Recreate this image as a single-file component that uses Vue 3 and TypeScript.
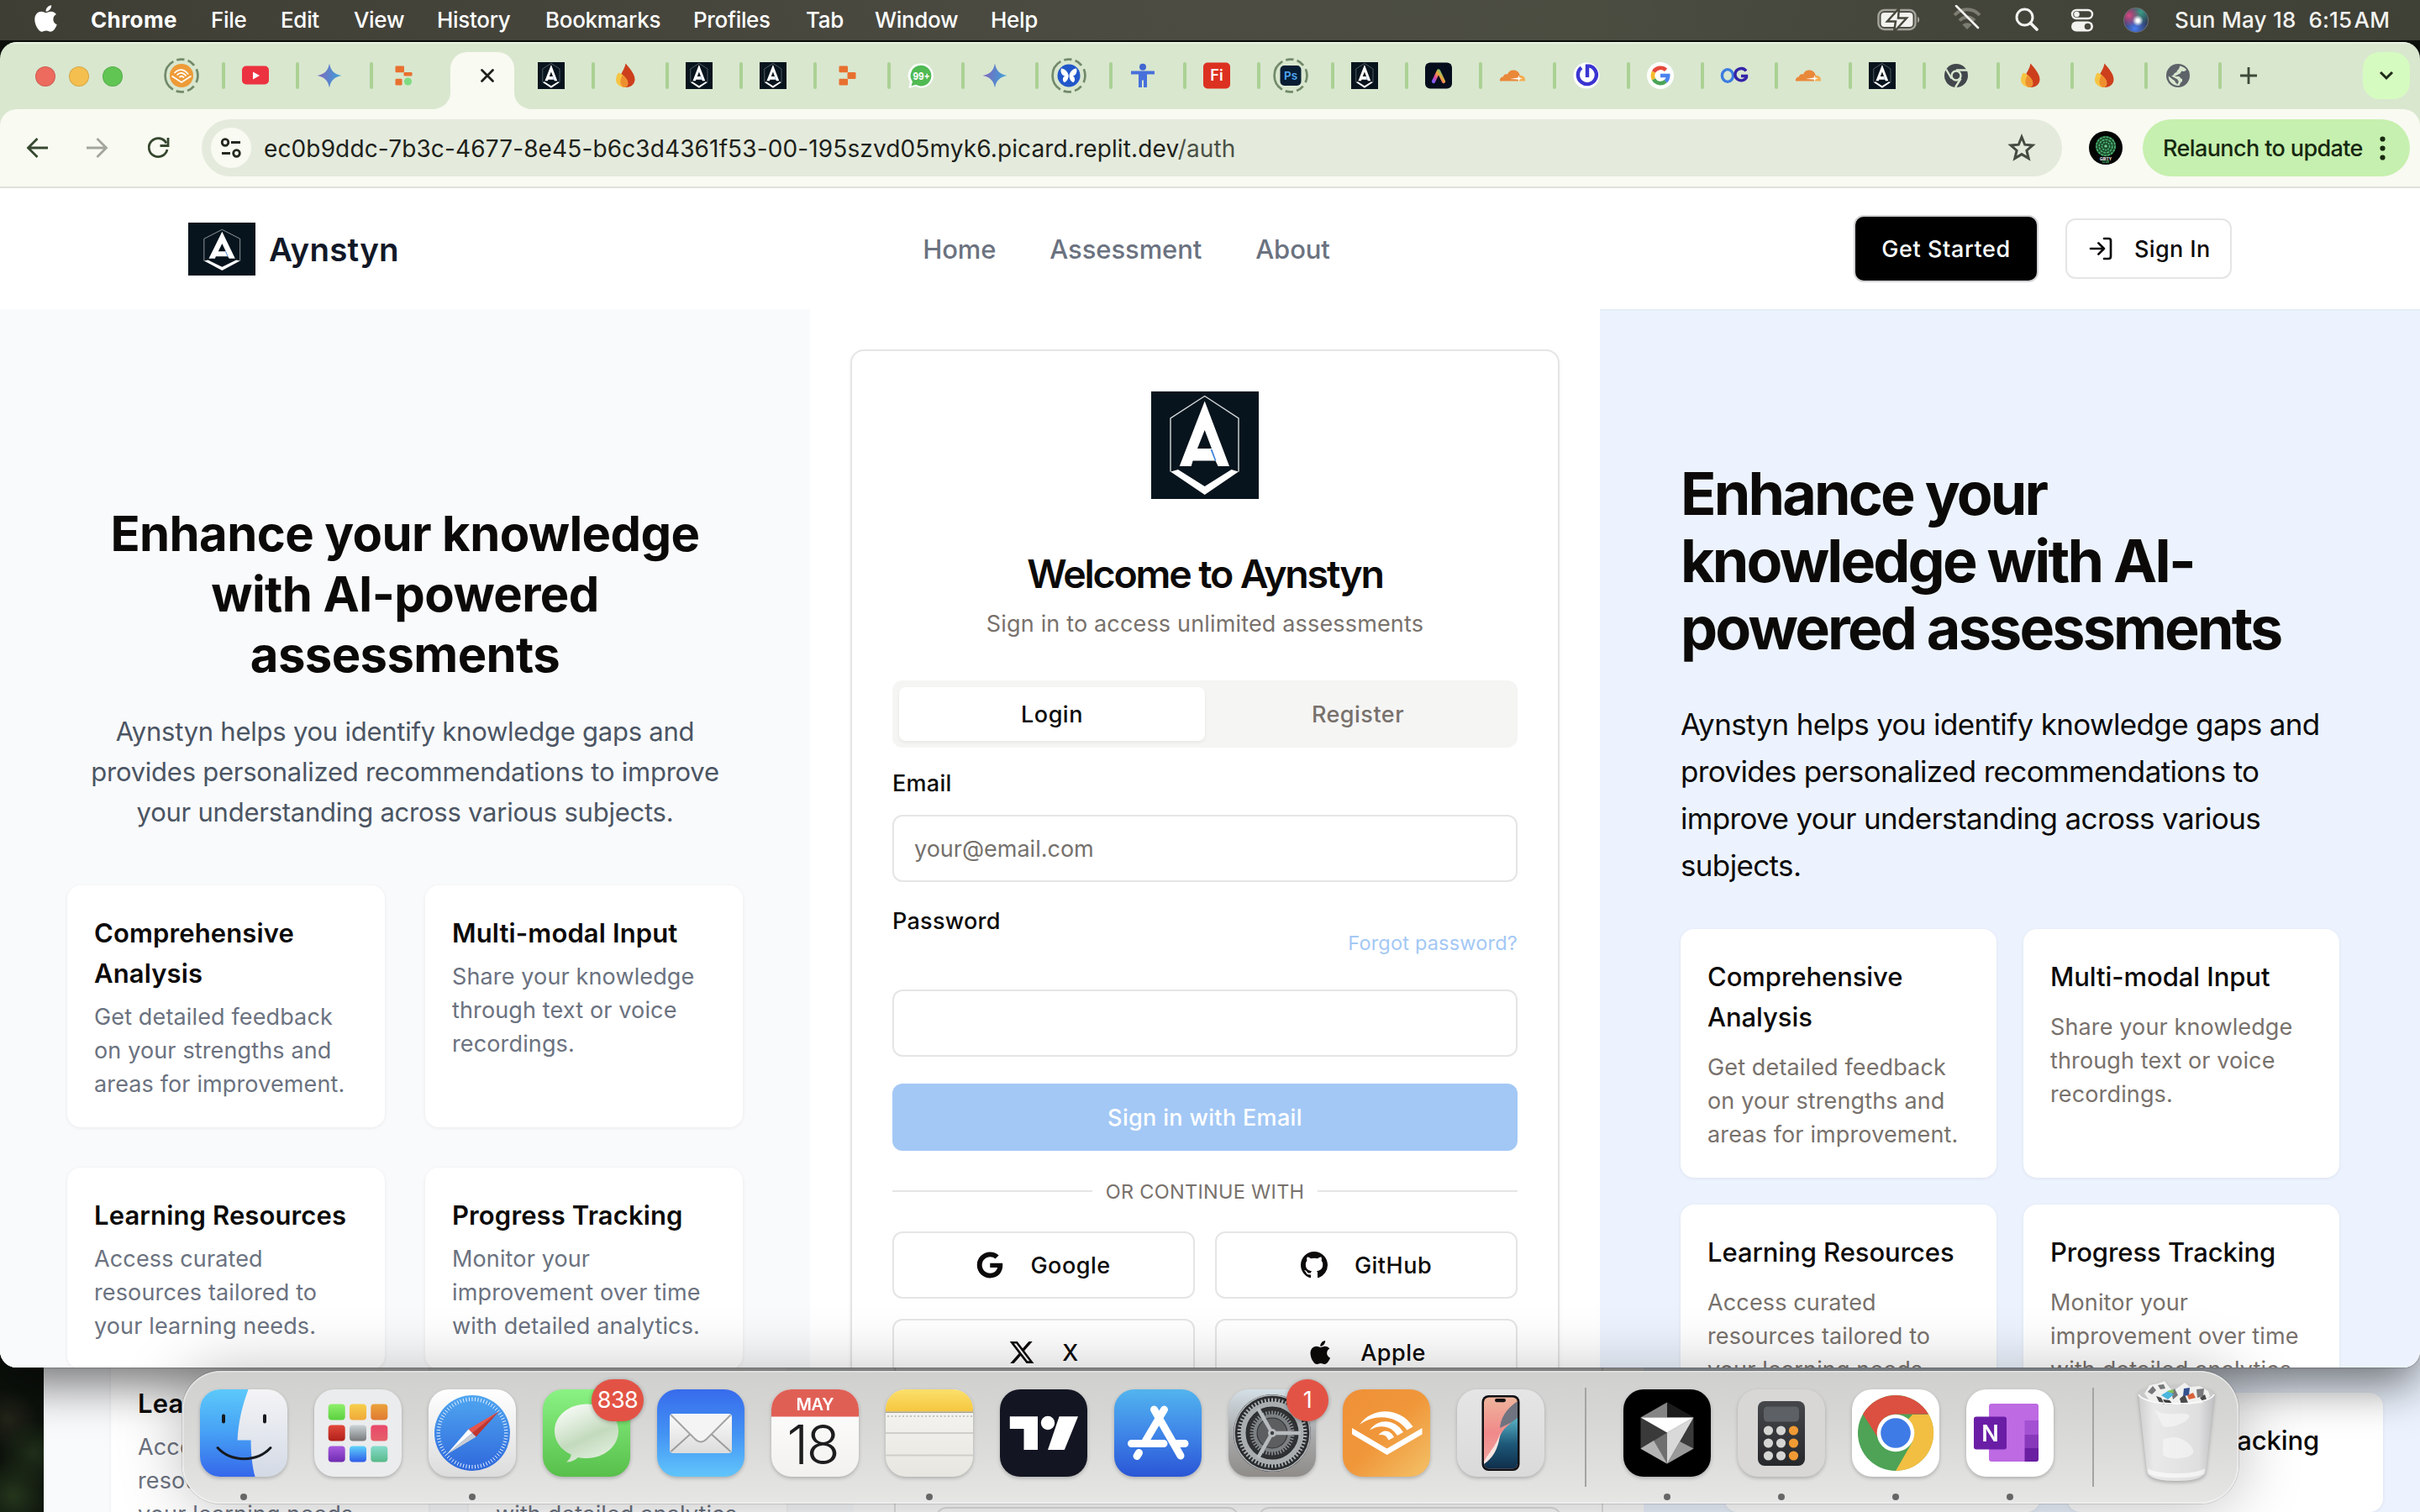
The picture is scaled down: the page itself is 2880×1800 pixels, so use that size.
<script setup lang="ts">
interface Tab { icon: string; ring?: boolean }
interface Feature { title: string[]; body: string[] }
interface DockItem { icon: string; badge?: string; dot?: boolean }

const menus = ['File', 'Edit', 'View', 'History', 'Bookmarks', 'Profiles', 'Tab', 'Window', 'Help']
const menuWidths = [83, 87, 99, 129, 176, 134, 82, 138, 55]

const logo = `<rect width="128" height="128" fill="#07141d"/>
<path d="M63.7 5.5 104 32V95.5M63.7 5.5 23 32V95.5" fill="none" stroke="#d5d9db" stroke-width="1.4"/>
<path fill="#fff" fill-rule="evenodd" d="M63.7 11.5 93 89H79.6L76.5 82.5H49.6L47.7 89H33.7ZM63.7 46 55 68H72Z"/>
<path fill="#3d7fd6" d="M70.5 69h2L77.5 82.5h-1.6Z"/>
<path fill="#fff" d="M23 95.5 32 93 63.7 113 95.5 93 104 95.5 63.7 123Z"/>`

// Favicons are drawn on a 40 x 40 grid.
const fav: Record<string, string> = {
  audible: `<circle cx="20" cy="20" r="14" fill="#ee9b37"/><g fill="none" stroke="#fff" stroke-width="1.8"><path d="M8.500 20.500 20 28 31.500 20.500"/><path d="M11.500 17c5-5.500 12-5.500 16.500 1.500M14.500 19.500c3.500-4 8-3.500 11 1M17.500 22c2-2 4-1.500 5.500.5"/></g>`,
  youtube: `<rect x="4" y="8.500" width="32" height="22" rx="5" fill="#ec3240"/><path d="M17 15.500 25 20 17 24.500Z" fill="#fff"/>`,
  gemini: `<defs><linearGradient id="gm" x1="0" x2="1" y1=".5" y2=".6"><stop offset="0" stop-color="#8567bd"/><stop offset=".5" stop-color="#5a84cb"/><stop offset="1" stop-color="#3fa6da"/></linearGradient></defs><path fill="url(#gm)" d="M20 5.500C21.500 14 26 18.500 34.500 20 26 21.500 21.500 26 20 34.500 18.500 26 14 21.500 5.500 20 14 18.500 18.500 14 20 5.500Z"/>`,
  replit: `<g fill="#e8702f"><rect x="10.500" y="8.500" width="10.500" height="7.700" rx="1.200"/><rect x="20.500" y="16" width="10" height="8" rx="1.200"/><rect x="10.500" y="23.800" width="10.500" height="7.700" rx="1.200"/></g>`,
  replitdot: `<g fill="#e8702f"><rect x="10.500" y="8.500" width="10.500" height="7.700" rx="1.200"/><rect x="20.500" y="16" width="10" height="4.500" rx="1.200"/><rect x="10.500" y="23.800" width="8" height="7.700" rx="1.200"/></g><circle cx="25.500" cy="27" r="4.600" fill="#7edb83"/>`,
  flame: `<path fill="#cd3f1c" d="M20.500 5.500C24 10 31.500 17 31.500 24.500 31.500 30 27 34 21 34 15 34 12 29.500 14 22 15.500 16 19.500 12 20.500 5.500Z"/><path fill="#f6c443" d="M12 16.500C10 19 9 22.500 9 25.500 9.500 31 14.500 34 20 34c3-1.500 4-4 3-7-1.500-4.500-6-8.500-11-10.500Z"/><path fill="#ee8f2f" d="M17 19.500C20 22 23 25 23.300 29c0 2-1 4-3.300 5-4-.5-6-3.500-5.500-8 .3-2.500 1.500-4.500 2.500-6.500Z"/>`,
  whatsapp: `<path fill="#fff" d="M20 5.500a14.500 14.500 0 1 1-6.500 27.300L5.500 35l1.300-7.500A14.500 14.500 0 0 1 20 5.500Z"/><path fill="#50ba53" d="M20 7.800a12.300 12.300 0 1 1-6 23l-5.500 1.500 1.500-5A12.300 12.300 0 0 1 20 7.800Z"/><text x="20.500" y="24.500" font-size="12" font-weight="700" fill="#fff" text-anchor="middle" textLength="20" lengthAdjust="spacingAndGlyphs" font-family="Inter, sans-serif">99+</text>`,
  butterfly: `<circle cx="20" cy="20" r="13.500" fill="#2257c9"/><g fill="#fff"><path d="M19.700 20C19 15 15 12 11 11.500c-1.500 4 .5 8.500 4.500 9-3 1-3.500 5.500-1 7.500 3-.5 5-4 5.200-8Z"/><path d="M20.500 20C21.200 15 25 12 29 11.500c1.500 4-.5 8.500-4.500 9 3 1 3.500 5.500 1 7.500-3-.5-5-4-5-8Z"/></g>`,
  person: `<circle cx="20" cy="9.800" r="4" fill="#4267d0"/><path fill="#4870db" d="M6 14.500H34V18.500H25V34H21V25.500H19V34H15V18.500H6Z"/>`,
  fi: `<rect x="4" y="4.500" width="32" height="31" rx="5" fill="#dc3021"/><text x="20" y="26" font-size="18" font-weight="600" fill="#fff" text-anchor="middle" font-family="Inter, sans-serif">Fi</text>`,
  ps: `<rect x="7.500" y="8" width="25" height="24" rx="5" fill="#081d33"/><text x="20" y="25" font-size="13.500" font-weight="600" fill="#4fa8f8" text-anchor="middle" font-family="Inter, sans-serif">Ps</text>`,
  adobe: `<defs><linearGradient id="ad" x1="0" x2="1" y1="1" y2=".1"><stop offset="0" stop-color="#7d5cf6"/><stop offset=".3" stop-color="#e04b9c"/><stop offset=".6" stop-color="#f0a53a"/><stop offset="1" stop-color="#4fd08a"/></linearGradient></defs><rect x="4" y="4.500" width="32" height="31" rx="6" fill="#050d1c"/><path d="M14 27 20 14.500 26 27" fill="none" stroke="url(#ad)" stroke-width="4.200" stroke-linecap="round" stroke-linejoin="round"/>`,
  cloudflare: `<path fill="#e98839" d="M5 26.500c-.5-3 1.500-5 4-5 0-2.500 2.500-4 5-3 1-3.500 4.500-5.500 8-5 4.500.5 7 4 7 8.500l-1 4.500Z"/><path fill="#f3ae53" d="M26.500 26.500 29 19.800c4 0 6.500 2.700 6 6.700Z"/><path fill="#fff" d="M27.500 19.500 28.400 22.600 31.500 23.500 28.400 24.400 27.500 27.500 26.600 24.400 17 24 26.600 22.600Z"/>`,
  power: `<circle cx="20" cy="20" r="15.500" fill="#fff"/><g fill="none" stroke="#3b35d1" stroke-width="4.400"><path d="M14 10.500a11 11 0 1 0 9-2.200"/><path d="M21 6.500V22"/></g>`,
  google: `<circle cx="20" cy="20" r="16" fill="#fff"/><g fill="none" stroke-width="4.600"><path stroke="#e5493b" d="M12 15.600A9.300 9.300 0 0 1 26.600 13.400"/><path stroke="#f5bc2f" d="M12 24.400A9.400 9.400 0 0 1 12 15.600"/><path stroke="#4ba457" d="M26.300 26.800A9.300 9.300 0 0 1 12 24.400"/><path stroke="#4a83ee" d="M20 20H29.200A9.300 9.300 0 0 1 26.300 26.800"/></g>`,
  og: `<g fill="none" stroke-width="3.400"><ellipse cx="12" cy="20" rx="6.600" ry="7.400" stroke="#3b7be0"/><path stroke="#3524a8" d="M34 14.500A7.200 7.200 0 1 0 34.500 22V20.500H28"/></g>`,
  chrome: `<circle cx="20" cy="20" r="14" fill="#42474c"/><circle cx="20" cy="20" r="5.500" fill="none" stroke="#d9e7cf" stroke-width="2.400"/><path d="M20 13.500H33M14.500 23.500 8 12.500M25.500 23.500 19 34" stroke="#d9e7cf" stroke-width="2.400" fill="none"/>`,
  globe: `<circle cx="20" cy="20" r="14" fill="#5e6369"/><path fill="#d9e7cf" d="M22 8.500C25 8.800 28 10.500 30 13c-1 2-4 2.500-5.500 1.500-1.500 1-1 3-3 3.500-1.500 0-1.500 1.500-3 1.500-1 0-1.500 1.500-3 1.500h5c2.500 0 2 3 4.500 3v3c-2 .5-2.500 3-3.500 5C14 32.500 8.500 27 8.700 20.500L13 24c1 1.500 3 1 3.500 3 .5 2 2.500 2 2.500 4L21 27c-1.500-1-1-2.500-2.500-3L12 20.500c2.500-.5 3-2 4-3.500 1.500-.5 3-1.500 3-3 1.500-1.500 3-2.500 3-5.500Z"/>`,
}

const leftTabs: Tab[] = [{ icon: 'audible', ring: true }, { icon: 'youtube' }, { icon: 'gemini' }, { icon: 'replitdot' }]
const rightTabs: Tab[] = [
  { icon: 'aynstyn' }, { icon: 'flame' }, { icon: 'aynstyn' }, { icon: 'aynstyn' }, { icon: 'replit' }, { icon: 'whatsapp' },
  { icon: 'gemini' }, { icon: 'butterfly', ring: true }, { icon: 'person' }, { icon: 'fi' }, { icon: 'ps', ring: true },
  { icon: 'aynstyn' }, { icon: 'adobe' }, { icon: 'cloudflare' }, { icon: 'power' }, { icon: 'google' }, { icon: 'og' },
  { icon: 'cloudflare' }, { icon: 'aynstyn' }, { icon: 'chrome' }, { icon: 'flame' }, { icon: 'flame' }, { icon: 'globe' },
]

const features: Feature[] = [
  { title: ['Comprehensive', 'Analysis'], body: ['Get detailed feedback', 'on your strengths and', 'areas for improvement.'] },
  { title: ['Multi-modal Input'], body: ['Share your knowledge', 'through text or voice', 'recordings.'] },
  { title: ['Learning Resources'], body: ['Access curated', 'resources tailored to', 'your learning needs.'] },
  { title: ['Progress Tracking'], body: ['Monitor your', 'improvement over time', 'with detailed analytics.'] },
]
const leftHeading = ['Enhance your knowledge', 'with AI-powered', 'assessments']
const rightHeading = ['Enhance your', 'knowledge with AI-', 'powered assessments']
const leftText = ['Aynstyn helps you identify knowledge gaps and', 'provides personalized recommendations to improve', 'your understanding across various subjects.']
const rightText = ['Aynstyn helps you identify knowledge gaps and', 'provides personalized recommendations to', 'improve your understanding across various', 'subjects.']

const appleMark = 'M318.7 268.7c-.2-36.7 16.4-64.4 50-84.8-18.8-26.9-47.2-41.7-84.7-44.6-35.5-2.8-74.3 20.7-88.5 20.7-15 0-49.4-19.7-76.4-19.7C63.3 141.2 4 184.8 4 273.5q0 39.3 14.4 81.2c12.8 36.7 59 126.7 107.2 125.2 25.2-.6 43-17.9 75.8-17.9 31.8 0 48.3 17.9 76.4 17.9 48.6-.7 90.4-82.5 102.6-119.3-65.2-30.7-61.7-90-61.7-91.9zm-56.6-164.2c27.3-32.4 24.8-61.9 24-72.5-24.1 1.4-52 16.4-67.9 34.9-17.5 19.8-27.8 44.3-25.6 71.9 26.1 2 49.9-11.4 69.5-34.3z'
const providers = [
  { name: 'Google', box: '0 0 488 512', d: 'M488 261.8C488 403.3 391.1 504 248 504 110.8 504 0 393.2 0 256S110.8 8 248 8c66.8 0 123 24.5 166.3 64.9l-67.5 64.9C258.5 52.6 94.3 116.6 94.3 256c0 86.5 69.1 156.6 153.7 156.6 98.2 0 135-70.4 140.8-106.9H248v-85.3h236.1c2.3 12.7 3.9 24.9 3.9 41.4z' },
  { name: 'GitHub', box: '0 0 16 16', d: 'M8 0C3.58 0 0 3.58 0 8c0 3.54 2.29 6.53 5.47 7.59.4.07.55-.17.55-.38 0-.19-.01-.82-.01-1.49-2.01.37-2.53-.49-2.69-.94-.09-.23-.48-.94-.82-1.13-.28-.15-.68-.52-.01-.53.63-.01 1.08.58 1.23.82.72 1.21 1.87.87 2.33.66.07-.52.28-.87.51-1.07-1.78-.2-3.64-.89-3.64-3.95 0-.87.31-1.59.82-2.15-.08-.2-.36-1.02.08-2.12 0 0 .67-.21 2.2.82.64-.18 1.32-.27 2-.27s1.36.09 2 .27c1.53-1.04 2.2-.82 2.2-.82.44 1.1.16 1.92.08 2.12.51.56.82 1.27.82 2.15 0 3.07-1.87 3.75-3.65 3.95.29.25.54.73.54 1.48 0 1.07-.01 1.93-.01 2.2 0 .21.15.46.55.38A8.01 8.01 0 0 0 16 8c0-4.42-3.58-8-8-8z' },
  { name: 'X', box: '0 0 24 24', d: 'M18.244 2.25h3.308l-7.227 8.26 8.502 11.24H16.17l-5.214-6.817L4.99 21.75H1.68l7.73-8.835L1.254 2.25H8.08l4.713 6.231zm-1.161 17.52h1.833L7.084 4.126H5.117z' },
  { name: 'Apple', box: '-14 0 404 512', d: appleMark },
]

const ticks = (n: number, r1: number, r2: number, cx = 52, cy = 52) =>
  Array.from({ length: n }, (_, i) => {
    const a = (i / n) * Math.PI * 2
    return `M${(cx + Math.cos(a) * r1).toFixed(2)} ${(cy + Math.sin(a) * r1).toFixed(2)}L${(cx + Math.cos(a) * r2).toFixed(2)} ${(cy + Math.sin(a) * r2).toFixed(2)}`
  }).join('')

const grad = (id: string, stops: string[], dir = 'x2="0" y2="1"') =>
  `<linearGradient id="${id}" ${dir}>${stops.map((c, i) => `<stop offset="${i / (stops.length - 1)}" stop-color="${c}"/>`).join('')}</linearGradient>`

const padColors = [
  ['#8ef06b', '#5bd03f'], ['#f6cf4a', '#f0a93a'], ['#eca23a', '#df7a33'],
  ['#e2483a', '#b0201a'], ['#ccd4d8', '#77797a'], ['#e9486a', '#e5606a'],
  ['#a85be0', '#6f2bb0'], ['#5fd3fb', '#2f5be8'], ['#86dccb', '#58b98a'],
]
const pads = padColors.map((c, i) => `<defs>${grad('lp' + i, c)}</defs><rect x="${16.7 + (i % 3) * 25.3}" y="${17.5 + Math.floor(i / 3) * 25}" width="20" height="19" rx="4" fill="url(#lp${i})"/>`).join('')
const calcKeys = [0, 1, 2].map(r => [0, 1, 2].map(c => `<circle cx="${36.5 + c * 15}" cy="${49 + r * 15}" r="5.600" fill="${c === 2 ? '#f09a34' : '#d5d5d3'}"/>`).join('')).join('')

// Dock icons are drawn on a 104 x 104 grid.
const dockArt: Record<string, string> = {
  finder: `<defs>${grad('fa', ['#5cc9fa', '#46a0f5', '#3567ea'])}${grad('fb', ['#f4f4f6', '#d3dae6'])}<clipPath id="fc"><rect width="104" height="104" rx="24"/></clipPath></defs><g clip-path="url(#fc)"><rect width="104" height="104" fill="url(#fb)"/><path fill="url(#fa)" d="M0 0H57.600C50 20 45.500 40 44.600 60.400H60.600C60.600 76 62 91 65.600 104H0Z"/></g><g fill="none" stroke="#16191e" stroke-linecap="round"><path stroke-width="4" d="M28 31.500V38.500M77 31.500V38.500"/><path stroke-width="3" d="M21 69.500C37 87 68 87 84 69.500"/></g>`,
  launchpad: `<rect width="104" height="104" rx="24" fill="#ebeced"/>${pads}`,
  safari: `<defs>${grad('sa', ['#ffffff', '#dcdcdc'])}${grad('sb', ['#4fa6f0', '#2f68dc'])}</defs><rect width="104" height="104" rx="24" fill="url(#sa)"/><circle cx="52" cy="52" r="45" fill="url(#sb)"/><path d="${ticks(72, 38, 42.5)}" stroke="#e8f2fd" stroke-width="1"/><path fill="#e8544a" d="M84 26 47.500 47.500 52 52Z"/><path fill="#c2352c" d="M84 26 52 52 56.500 56.500Z"/><path fill="#fff" d="M21 78 47.500 47.500 52 52Z"/><path fill="#c9ccd2" d="M21 78 52 52 56.500 56.500Z"/>`,
  messages: `<defs>${grad('ma', ['#8af283', '#57bf4a'])}${grad('mb', ['#ffffff', '#e3eee0', '#c3dabd', '#dcebd8'], 'x2=".5" y2="1"')}</defs><rect width="104" height="104" rx="24" fill="url(#ma)"/><path fill="url(#mb)" d="M52 17.500C73 17.500 90 31.500 90 49.500S73 82 52 82C48.500 82 45 81.600 42 81 38.500 84.500 34 86.500 28 86.500 31 84 33.500 81.500 33.500 77.500 21.500 72 14 61.500 14 49.500 14 31.500 31 17.500 52 17.500Z"/>`,
  mail: `<defs>${grad('la', ['#376bec', '#4392f3', '#61c5fb'])}${grad('lb', ['#fbfbfb', '#dcdcdc'])}</defs><rect width="104" height="104" rx="24" fill="url(#la)"/><rect x="15" y="29" width="74" height="47" rx="4" fill="url(#lb)"/><path d="M16.500 74 42 51M87.500 74 62 51" stroke="#9b9b9b" stroke-width="1.800" fill="none"/><path d="M16.500 30.500 45 59C49.500 63.500 54.500 63.500 59 59L87.500 30.500" fill="#f4f4f4" stroke="#a2a2a2" stroke-width="1.800"/>`,
  calendar: `<defs>${grad('ca', ['#ffffff', '#f2f1ef'])}<clipPath id="cc"><rect width="104" height="104" rx="24"/></clipPath></defs><g clip-path="url(#cc)"><rect width="104" height="104" fill="url(#ca)"/><rect width="104" height="32.500" fill="#e05f55"/></g><text x="52" y="25" font-size="20" font-weight="600" fill="#fff" text-anchor="middle" textLength="45" font-family="Inter, sans-serif">MAY</text><text x="50" y="88.500" font-size="65" font-weight="300" fill="#1d1d1f" text-anchor="middle" textLength="63" font-family="Inter, sans-serif">18</text>`,
  notes: `<defs>${grad('na', ['#fbdf6c', '#f6c73e'])}${grad('nb', ['#f7f7f4', '#e7e6e0'])}<clipPath id="nc"><rect width="104" height="104" rx="24"/></clipPath></defs><g clip-path="url(#nc)"><rect width="104" height="104" fill="url(#nb)"/><rect width="104" height="26.500" fill="url(#na)"/><rect y="26.500" width="104" height="1.500" fill="#a5a08d"/><path d="M2 32H104" stroke="#c3c2bd" stroke-width="2" stroke-dasharray="2 2.500"/><path d="M0 52H104M0 78.500H104" stroke="#cfceca" stroke-width="2"/></g>`,
  tradingview: `<rect width="104" height="104" rx="24" fill="#131622"/><path fill="#fff" d="M11.800 32.300H45V72H28.500V47H11.800ZM70.600 32.300H93L76.800 72H57Z"/><circle cx="57" cy="40" r="8.200" fill="#fff"/>`,
  appstore: `<defs>${grad('aa', ['#52b4ee', '#3f86e8', '#2a56d6'])}</defs><rect width="104" height="104" rx="24" fill="url(#aa)"/><g stroke="#fff" stroke-width="9" stroke-linecap="round" fill="none"><path d="M59.500 24 37.500 61M47.500 24 79 79M20.500 64.500H59M72 64.500H84M29.500 75.500 27 79.500"/></g>`,
  settings: `<defs>${grad('ta', ['#d4dfe6', '#a9abac', '#8f8c89'])}</defs><rect width="104" height="104" rx="24" fill="url(#ta)"/><circle cx="52" cy="52" r="46" fill="#2a2c2e"/><circle cx="52" cy="52" r="45" fill="none" stroke="#b5b9bc" stroke-width="1.500"/><path d="${ticks(60, 36, 41.5)}" stroke="#a9adb0" stroke-width="2"/><circle cx="52" cy="52" r="34.500" fill="none" stroke="#a9adb0" stroke-width="6"/><circle cx="52" cy="52" r="30.500" fill="#2f3133"/><path d="${ticks(44, 22, 26.5)}" stroke="#8d9194" stroke-width="1.600"/><circle cx="52" cy="52" r="20.500" fill="none" stroke="#7d8184" stroke-width="4"/><circle cx="52" cy="52" r="17.500" fill="#5c5e60"/><path d="M52 52H86M52 52 35 22.500M52 52 35 81.500" stroke="#b7bbbe" stroke-width="4.500"/><circle cx="52" cy="52" r="5" fill="#b7bbbe"/><circle cx="52" cy="52" r="2.200" fill="#3c3e40"/>`,
  audible: `<defs>${grad('ua', ['#ef9037', '#f0973a', '#f4c268'], 'x2="1" y2="1"')}</defs><rect width="104" height="104" rx="24" fill="url(#ua)"/><g fill="#fff"><path d="M11 46 52.600 70.500 94.500 46V53.500L52.600 78 11 53.500Z"/><path d="M20 42C36 19 70 22 83.500 44.500L76.500 48.500C63 30 38 29 20 42Z"/><path d="M32 48.500C43 33 63 36 72 51L65 55C57 42.500 44 41.500 32 48.500Z"/><path d="M42.500 54.500C48.500 46.500 57 49 61 57L54.500 60.500C52 55 48.500 53 42.500 54.500Z"/></g>`,
  phone: `<defs>${grad('pa', ['#e6e5e6', '#dadadb'])}${grad('pb', ['#efb59c', '#f0898a', '#f2a8a2'])}${grad('pc', ['#58b3c6', '#1e5878', '#0e2c49'])}<clipPath id="pd"><rect x="32" y="9.500" width="40" height="85" rx="6"/></clipPath></defs><rect width="104" height="104" rx="24" fill="url(#pa)"/><rect x="29.500" y="7" width="45" height="90" rx="8" fill="#101114"/><g clip-path="url(#pd)"><rect x="32" y="9" width="40" height="86" fill="url(#pb)"/><path fill="#6f7480" d="M72 14C58 24 52 34 51 46L72 36Z"/><path fill="url(#pc)" d="M72 34C58 44 52 50 50 60 47 74 38 84 32 88V96H72Z"/><path fill="#f6e4e0" d="M52 49C48 66 40 72 32 86V89C42 82 48 72 50 60Z"/></g><rect x="45" y="11" width="13" height="4.200" rx="2.100" fill="#101114"/>`,
  cursor: `<rect width="104" height="104" rx="24" fill="#000"/><path fill="#3a3a3a" d="M52 15.500 83.500 33.500V70.500L52 88.500 20.500 70.500V33.500Z"/><path fill="#858585" d="M52 15.500V33.500H20.500Z"/><path fill="#1c1c1c" d="M52 15.500 83.500 33.500H52Z"/><path fill="#6f6f6f" d="M20.500 70.500 52 51.500V88.500Z"/><path fill="#b4b4b4" d="M20.500 70.500 36 61 52 88.500Z"/><path fill="#d9d9d9" d="M83.500 33.500 52 88.500V51.500Z"/><path fill="#fff" d="M20.500 33.500H83.500L52 51.500Z"/><path fill="#9a9a9a" d="M83.500 70.500 52 88.500 67 62Z"/>`,
  calculator: `<defs>${grad('xa', ['#45474b', '#26282b'])}</defs><rect width="104" height="104" rx="24" fill="#d8d7d5"/><rect x="24" y="14" width="56" height="77" rx="8" fill="url(#xa)"/><rect x="31" y="20.500" width="42" height="18" rx="4.500" fill="#5d6064"/>${calcKeys}`,
  chrome: `<rect width="104" height="104" rx="24" fill="#fff"/><circle cx="52" cy="52" r="45" fill="#4ea356"/><path fill="#f2bf43" d="M52 52 72 30H91.500A45 45 0 0 1 52 97L71.500 63.200Z"/><path fill="#db5040" d="M13 29.500A45 45 0 0 1 91 29.500H52A22.500 22.500 0 0 0 30.500 57Z"/><circle cx="52" cy="52" r="22.300" fill="#fff"/><circle cx="52" cy="52" r="17.800" fill="#3f7be6"/>`,
  onenote: `<rect width="104" height="104" rx="24" fill="#fff"/><rect x="27" y="17" width="59" height="69" rx="3" fill="#bd6ae3"/><path fill="#a350d2" d="M69.500 37H86V54H69.500Z"/><path fill="#8838ba" d="M69.500 54H86V70H69.500Z"/><path fill="#6a1fa2" d="M69.500 70H86V83a3 3 0 0 1-3 3H69.500Z"/><rect x="9" y="32.500" width="39" height="39" rx="3" fill="#6a1ea6"/><text x="28.500" y="62" font-size="27" font-weight="600" fill="#fff" text-anchor="middle" font-family="Inter, sans-serif">N</text>`,
}

const dockLeft: DockItem[] = [
  { icon: 'finder', dot: true }, { icon: 'launchpad' }, { icon: 'safari', dot: true }, { icon: 'messages', badge: '838' }, { icon: 'mail' },
  { icon: 'calendar' }, { icon: 'notes', dot: true }, { icon: 'tradingview' }, { icon: 'appstore' }, { icon: 'settings', badge: '1' },
  { icon: 'audible' }, { icon: 'phone' },
]
const dockRight: DockItem[] = [{ icon: 'cursor', dot: true }, { icon: 'calculator', dot: true }, { icon: 'chrome', dot: true }, { icon: 'onenote', dot: true }]
</script>

<template>
  <div class="desktop">
    <!-- second browser window, mostly covered -->
    <div class="back-window">
      <div class="back-left">
        <div class="card">
          <h3 class="card-title"><span>Learning Resources</span></h3>
          <p class="card-body"><span v-for="l in features[2].body" :key="l">{{ l }}</span></p>
        </div>
        <div class="card tail">
          <p class="card-body"><span>with detailed analytics.</span></p>
        </div>
      </div>
      <div class="back-middle">
        <div class="back-auth"><i></i><i></i></div>
      </div>
      <div class="back-right">
        <div class="card soft"></div>
        <div class="card soft">
          <h3 class="card-title"><span>Progress Tracking</span></h3>
        </div>
      </div>
    </div>

    <header class="menubar">
      <svg class="apple" viewBox="0 0 384 512"><path :d="appleMark" fill="#fff" /></svg>
      <b class="app-name">Chrome</b>
      <span v-for="(m, i) in menus" :key="m" class="menu" :style="{ width: menuWidths[i] + 'px' }">{{ m }}</span>
      <div class="status">
        <svg width="52" height="28" viewBox="0 0 52 28" class="battery">
          <rect x="1.500" y="2" width="44" height="23" rx="7" fill="none" stroke="#a3a39b" stroke-width="2.500" />
          <rect x="4.500" y="5" width="38" height="17" rx="4" fill="#f2f2ef" />
          <path d="M48 10v7c3-1 3-6 0-7Z" fill="#a3a39b" />
          <path d="M26 0 12 15.500H22L20 28 35 11.500H25Z" fill="#f2f2ef" stroke="#47473d" stroke-width="2.500" />
        </svg>
        <svg width="40" height="30" viewBox="0 0 40 30" class="wifi">
          <g fill="none" stroke="#7c7c72" stroke-width="4"><path d="M5 12C13 3 27 3 35 12" /><path d="M11 18.500C16 13 24 13 29 18.500" /></g>
          <path d="M20 29 14.500 23.500C17.500 20.500 22.500 20.500 25.500 23.500Z" fill="#7c7c72" />
          <path d="M7 1 33 27" stroke="#f2f2ef" stroke-width="2.600" stroke-linecap="round" />
        </svg>
        <svg width="28" height="28" viewBox="0 0 28 28" class="search"><g fill="none" stroke="#f2f2ef" stroke-width="3"><circle cx="11.500" cy="11.500" r="9.500" /><path d="M18.500 18.500 26 26" stroke-linecap="round" stroke-width="3.600" /></g></svg>
        <svg width="28" height="28" viewBox="0 0 28 28" class="control">
          <rect x="2" y="2" width="24" height="10" rx="5" fill="none" stroke="#f2f2ef" stroke-width="2.400" /><circle cx="7.500" cy="7" r="3.300" fill="#f2f2ef" />
          <rect x="1" y="15.500" width="26" height="12" rx="6" fill="#f2f2ef" /><circle cx="20.500" cy="21.500" r="3.800" fill="#47473d" />
        </svg>
        <span class="siri"></span>
        <span class="clock">Sun May 18</span><span class="clock time">6:15&hairsp;AM</span>
      </div>
    </header>

    <main class="window">
      <div class="tabstrip">
        <div class="lights"><i class="red"></i><i class="yellow"></i><i class="green"></i></div>
        <div v-for="(t, i) in leftTabs" :key="'l' + i" class="tab" :class="{ plain: i === 3 }">
          <svg v-if="t.ring" class="ring" viewBox="0 0 40 40"><circle cx="20" cy="20" r="18.500" fill="none" stroke="#728a69" stroke-width="2.600" stroke-dasharray="8 5 9 4 9 4 38 4 9 4 9 5 8.200" /></svg>
          <svg class="favicon" viewBox="0 0 40 40" v-html="fav[t.icon]"></svg>
        </div>
        <div class="tab-active">
          <svg width="120" height="68" viewBox="0 0 120 68">
            <path fill="#f9faf2" d="M0 68C12 68 22 60 22 48V20A20 20 0 0 1 42 0H78A20 20 0 0 1 98 20V48C98 60 108 68 120 68Z" />
            <path d="M59.500 21.500 72.500 34.500M72.500 21.500 59.500 34.500" stroke="#1d1f1a" stroke-width="2.800" stroke-linecap="round" />
          </svg>
        </div>
        <div v-for="(t, i) in rightTabs" :key="'r' + i" class="tab">
          <svg v-if="t.ring" class="ring" viewBox="0 0 40 40"><circle cx="20" cy="20" r="18.500" fill="none" stroke="#728a69" stroke-width="2.600" stroke-dasharray="8 5 9 4 9 4 38 4 9 4 9 5 8.200" /></svg>
          <svg v-if="t.icon === 'aynstyn'" class="favicon logo" viewBox="0 0 128 128" v-html="logo"></svg>
          <svg v-else class="favicon" viewBox="0 0 40 40" v-html="fav[t.icon]"></svg>
        </div>
        <svg class="plus" width="24" height="24" viewBox="0 0 24 24"><path d="M12 2V22M2 12H22" stroke="#3e4a39" stroke-width="2.800" /></svg>
        <div class="tab-menu"><svg width="20" height="14" viewBox="0 0 20 14"><path d="M3 3 10 10 17 3" fill="none" stroke="#1f2a19" stroke-width="3" /></svg></div>
      </div>

      <div class="toolbar">
        <svg class="nav" width="28" height="28" viewBox="0 0 28 28"><path d="M27 14H4M14.500 3 3.500 14 14.500 25" fill="none" stroke="#36482f" stroke-width="2.800" /></svg>
        <svg class="nav" width="28" height="28" viewBox="0 0 28 28"><path d="M1 14H24M13.500 3 24.500 14 13.500 25" fill="none" stroke="#a2a69d" stroke-width="2.800" /></svg>
        <svg class="nav" width="28" height="28" viewBox="0 0 28 28"><path d="M24 8.500A11 11 0 1 0 25 16" fill="none" stroke="#36482f" stroke-width="2.800" /><path d="M26 2V11.500H16.500" fill="none" stroke="#36482f" stroke-width="2.800" /></svg>
        <div class="omnibox">
          <span class="site-info">
            <svg width="28" height="28" viewBox="0 0 28 28"><g fill="none" stroke="#23291f" stroke-width="2.800"><circle cx="7" cy="7.500" r="3.800" /><path d="M14 7.500H25M3 20.500H13" /><circle cx="20.500" cy="20.500" r="3.800" /></g></svg>
          </span>
          <span class="url">ec0b9ddc-7b3c-4677-8e45-b6c3d4361f53-00-195szvd05myk6.picard.replit.dev<em>/auth</em></span>
          <svg class="star" width="34" height="34" viewBox="0 0 34 34"><path d="M17 4 20.700 13.200 30 14 22.900 20.200 25.200 29.600 17 24.600 8.800 29.600 11.100 20.200 4 14 13.300 13.200Z" fill="none" stroke="#464b42" stroke-width="3" /></svg>
        </div>
        <svg class="avatar" viewBox="0 0 40 40">
          <circle cx="20" cy="20" r="20" fill="#030504" />
          <circle cx="20" cy="18" r="12.300" fill="#1b4a2c" />
          <g fill="none" stroke="#4db373" stroke-width="1.600"><circle cx="20" cy="18" r="11" stroke-dasharray="3 1" /><circle cx="20" cy="18" r="7.800" stroke-dasharray="3 1" /><circle cx="20" cy="18" r="4.600" stroke-dasharray="2 1" /></g><circle cx="20" cy="18" r="1.800" fill="#6fc98c" />
          <text x="20" y="34.500" font-size="4.500" font-weight="700" fill="#fff" text-anchor="middle" font-family="Inter, sans-serif">GRITY</text>
          <text x="20" y="38" font-size="3" font-weight="700" fill="#4fc37c" text-anchor="middle" font-family="Inter, sans-serif">CLUB</text>
        </svg>
        <div class="relaunch"><span>Relaunch to update</span><i></i></div>
      </div>

      <section class="page">
        <div class="site-header">
          <div class="brand">
            <span class="brand-mark"><svg viewBox="12 0 104 128" preserveAspectRatio="none" v-html="logo"></svg></span>
            <span>Aynstyn</span>
          </div>
          <nav class="site-nav"><a>Home</a><a>Assessment</a><a>About</a></nav>
          <div class="actions">
            <button class="btn-dark">Get Started</button>
            <button class="btn-light">
              <svg width="32" height="32" viewBox="0 0 24 24" fill="none" stroke="#0c0a09" stroke-width="2" stroke-linecap="round" stroke-linejoin="round"><path d="M15 3h4a2 2 0 0 1 2 2v14a2 2 0 0 1-2 2h-4M10 17l5-5-5-5M15 12H3" /></svg>
              <span>Sign In</span>
            </button>
          </div>
        </div>

        <div class="columns">
          <div class="col-left">
            <h1><span v-for="l in leftHeading" :key="l">{{ l }}</span></h1>
            <p class="lead"><span v-for="l in leftText" :key="l">{{ l }}</span></p>
            <div class="grid">
              <div v-for="f in features" :key="f.title[0]" class="card">
                <h3 class="card-title"><span v-for="l in f.title" :key="l">{{ l }}</span></h3>
                <p class="card-body"><span v-for="l in f.body" :key="l">{{ l }}</span></p>
              </div>
            </div>
          </div>

          <div class="col-middle">
            <div class="auth">
              <svg class="auth-logo" viewBox="0 0 128 128" v-html="logo"></svg>
              <h2>Welcome to Aynstyn</h2>
              <p class="auth-sub">Sign in to access unlimited assessments</p>
              <div class="switch"><span class="on">Login</span><span>Register</span></div>
              <label class="email-label">Email</label>
              <div class="input">your@email.com</div>
              <div class="pw-row"><label>Password</label><a>Forgot password?</a></div>
              <div class="input"></div>
              <button class="submit">Sign in with Email</button>
              <div class="divider"><i></i><span>OR CONTINUE WITH</span><i></i></div>
              <div class="providers">
                <button v-for="p in providers" :key="p.name">
                  <svg width="32" height="32" :viewBox="p.box"><path :d="p.d" fill="#0c0a09" /></svg><span>{{ p.name }}</span>
                </button>
              </div>
            </div>
          </div>

          <div class="col-right">
            <h1><span v-for="l in rightHeading" :key="l">{{ l }}</span></h1>
            <p class="lead"><span v-for="l in rightText" :key="l">{{ l }}</span></p>
            <div class="grid">
              <div v-for="f in features" :key="f.title[0]" class="card soft">
                <h3 class="card-title"><span v-for="l in f.title" :key="l">{{ l }}</span></h3>
                <p class="card-body"><span v-for="l in f.body" :key="l">{{ l }}</span></p>
              </div>
            </div>
          </div>
        </div>
      </section>
    </main>

    <footer class="dock">
      <div v-for="d in dockLeft" :key="d.icon" class="dock-item">
        <svg viewBox="0 0 104 104" v-html="dockArt[d.icon]"></svg>
        <b v-if="d.badge" class="badge" :class="{ round: d.badge.length === 1 }">{{ d.badge }}</b>
        <i v-if="d.dot"></i>
      </div>
      <span class="dock-rule"></span>
      <div v-for="d in dockRight" :key="d.icon" class="dock-item">
        <svg viewBox="0 0 104 104" v-html="dockArt[d.icon]"></svg>
        <i v-if="d.dot"></i>
      </div>
      <span class="dock-rule last"></span>
      <svg class="trash" viewBox="0 0 92 120">
        <defs>
          <linearGradient id="tr" x2="1" y2="0"><stop offset="0" stop-color="#cfcfd0" /><stop offset=".2" stop-color="#e9e9e9" /><stop offset=".8" stop-color="#dfdfdf" /><stop offset="1" stop-color="#c0c1c4" /></linearGradient>
        </defs>
        <path d="M1 16 11 108C13 116 27 119 46 119S79 116 81 108L91 16Z" fill="url(#tr)" />
        <ellipse cx="46" cy="15" rx="45" ry="10" fill="#c9c9ca" />
        <path fill="#f0f0ef" d="M8 15 14 5 24 3 32 0 38 8 42 12 49 7 56 2 62 7 74 6 84 12 86 18 78 26 60 28 40 28 14 23Z" />
        <path fill="#77787a" d="M12 13 18 6 22 11 17 16ZM24 5 31 4 33 9 27 10ZM40 13 44 9 48 17 42 22ZM70 10 79 9 78 18 71 20Z" />
        <path fill="#4b4b4d" d="M22 18 28 20 32 28 26 26ZM50 21 56 16 60 26 52 28ZM74 20 80 16 82 22 78 25Z" />
        <path fill="#4bb6de" d="M28 17 36 12 43 16 36 22Z" /><path fill="#7fc25a" d="M35 12 42 10 43 14 39 14Z" />
        <path fill="#33508f" d="M55 9 62 8 61 17 54 18Z" /><path fill="#d9623a" d="M59 17 66 14 69 20 61 22Z" /><path fill="#3a3a3c" d="M30 22 38 23 42 28 33 27Z" />
        <path d="M1 16C4 23 22 27 46 27S88 23 91 16" fill="none" stroke="#fafafa" stroke-width="1.800" />
        <path fill="#f5f5f5" opacity=".7" d="M20 34C34 44 52 36 60 40S44 58 30 54ZM30 70C46 62 62 72 66 82S40 96 30 88Z" />
        <path fill="#fff" opacity=".6" d="M12 104C24 112 68 112 80 104L79 110C72 117 20 117 13 110Z" />
      </svg>
    </footer>
  </div>
</template>

<style>
html, body { margin: 0; background: #14180f; }
</style>

<style scoped>
* { box-sizing: border-box; }
.desktop {
  position: relative; width: 2880px; height: 1800px; overflow: hidden;
  font-family: Inter, "Liberation Sans", sans-serif; color: #0c0a09;
  background: radial-gradient(circle at 16px 1780px, #24361c 0, transparent 44px), radial-gradient(circle at 40px 1730px, #1f2e19 0, transparent 40px), radial-gradient(circle at 10px 1690px, #232419 0, transparent 36px), #0d120c;
}
h1, h2, h3, p { margin: 0; }
h1 span, .lead span, .card-title span, .card-body span { display: block; white-space: nowrap; }
button { font: inherit; padding: 0; margin: 0; }
svg { display: block; flex: none; }

/* menu bar */
.menubar {
  position: relative; z-index: 2; height: 48px; display: flex; align-items: center; padding: 0 0 2px 40px;
  background: linear-gradient(90deg, #3f3e35 0, #45443b 22%, #4b4b42 45%, #4c4d41 65%, #43443a 82%, #3f4036 100%);
  color: #fff; font-size: 26px; font-weight: 500; letter-spacing: -0.012em;
}
.apple { width: 29px; height: 36px; margin: -2px 39px 0 0; }
.app-name { width: 143px; font-weight: 700; letter-spacing: 0.015em; }
.menu { flex: none; white-space: nowrap; }
.status { margin-left: auto; display: flex; align-items: center; padding-right: 36px; color: #f2f2ef; }
.battery { margin: 2px 35px 0 0; }
.wifi { margin: -4px 37px 0 0; }
.search { margin: 0 38px 0 0; }
.control { margin: 1px 36px 0 0; }
.siri {
  width: 28px; height: 28px; border-radius: 50%; margin: 2px 32px 0 0; box-shadow: 0 0 0 1px #6d6f74;
  background: radial-gradient(circle at 58% 52%, #fff 0 8%, transparent 30%), radial-gradient(circle at 20% 30%, #d64a83 0, transparent 45%), radial-gradient(circle at 70% 15%, #3c9c86 0, transparent 50%), radial-gradient(circle at 45% 85%, #4a7df0 0, transparent 60%), #2b3350;
}
.clock { white-space: nowrap; letter-spacing: 0.0095em; }
.time { margin-left: 15px; letter-spacing: 0.005em; }

/* windows */
.window {
  position: absolute; left: 0; top: 50px; width: 2880px; height: 1578px; border-radius: 20px; overflow: hidden;
  background: #d9e7cf; box-shadow: 0 20px 56px rgba(0, 0, 0, .55), 0 0 2px rgba(0, 0, 0, .5);
}
.tabstrip { height: 80px; display: flex; align-items: center; box-shadow: inset 0 2px 0 #e9f2e2; }
.lights { width: 180px; padding: 2px 0 0 42px; display: flex; gap: 16px; flex: none; }
.lights i { width: 24px; height: 24px; border-radius: 50%; border: 1px solid rgba(0, 0, 0, .12); }
.red { background: #ec6a5e; }
.yellow { background: #f4bf4f; }
.green { background: #61c554; }
.tab { position: relative; width: 88px; height: 40px; padding-left: 16px; flex: none; display: flex; align-items: center; }
.tab::after { content: ""; width: 4px; height: 32px; border-radius: 2px; background: #abd194; margin-left: auto; }
.tab.plain::after { display: none; }
.favicon { width: 40px; height: 40px; }
.favicon.logo { width: 32px; height: 32px; margin: 0 4px; }
.ring { position: absolute; left: 15px; top: -1px; width: 42px; height: 42px; }
.tab-active { width: 88px; height: 68px; flex: none; align-self: flex-end; display: flex; }
.tab-active svg { margin-left: -18px; }
.plus { margin-left: 20px; }
.tab-menu { width: 56px; height: 56px; border-radius: 20px; background: #d6fbc0; margin: 0 12px 0 auto; display: flex; align-items: center; justify-content: center; }
.toolbar {
  height: 94px; padding: 0 12px 0 30px; display: flex; align-items: center; background: #f9faf2;
  border-bottom: 2px solid #dfe1d9; border-radius: 20px 20px 0 0;
}
.nav { margin-right: 44px; }
.omnibox { width: 2214px; height: 68px; margin-left: -6px; border-radius: 34px; background: #e4ebdd; display: flex; align-items: center; padding: 0 31px 0 11px; flex: none; }
.site-info { width: 48px; height: 48px; border-radius: 50%; background: #f9faf2; display: flex; align-items: center; justify-content: center; }
.url { margin: 1px 0 0 15px; font-size: 28px; letter-spacing: 0.0045em; color: #1d211a; white-space: nowrap; }
.url em { font-style: normal; color: #4a5045; }
.star { margin-left: auto; }
.avatar { width: 40px; height: 40px; margin-left: 32px; }
.relaunch { margin-left: auto; width: 318px; height: 68px; border-radius: 34px; background: #c6f0af; display: flex; align-items: center; padding-left: 24px; font-size: 27px; font-weight: 500; letter-spacing: -0.0225em; color: #16280f; white-space: nowrap; }
.relaunch i { width: 5px; height: 5px; border-radius: 50%; margin-left: 21px; background: #16280f; box-shadow: 0 -11px 0 .6px #16280f, 0 11px 0 .6px #16280f, 0 0 0 .6px #16280f; }

/* page */
.page { height: 1404px; background: #fff; display: flex; flex-direction: column; }
.site-header { height: 144px; flex: none; background: #fff; padding: 0 224px; display: flex; align-items: center; justify-content: space-between; }
.brand { width: 251px; display: flex; align-items: center; gap: 16px; font-size: 38.5px; font-weight: 600; letter-spacing: 0.005em; color: #111827; margin-top: 1px; }
.brand-mark { width: 80px; height: 63px; background: #07141d; display: flex; justify-content: center; padding-top: 6px; margin-top: -1px; }
.brand-mark svg { height: 53px; width: 55px; }
.site-nav { display: flex; gap: 64px; font-size: 31px; font-weight: 500; letter-spacing: -0.003em; color: #6b7280; margin-top: 1px; }
.actions { display: flex; align-items: center; gap: 32px; font-size: 27px; font-weight: 500; }
.btn-dark { width: 220px; height: 80px; border-radius: 12px; border: 2px solid #d3d3d6; background: #000; color: #fff; letter-spacing: 0.022em; }
.btn-light { width: 198px; height: 72px; border-radius: 12px; border: 2px solid #e5e5e5; background: #fff; color: #0c0a09; display: flex; align-items: center; padding-left: 24px; gap: 24px; letter-spacing: 0.014em; }
.columns { flex: 1; display: flex; overflow: hidden; }
.col-left { width: 964px; flex: none; background: #f9fafc; padding: 231px 80px 0; }
.col-left h1 { font-size: 58px; line-height: 72px; font-weight: 700; letter-spacing: -0.0105em; text-align: center; color: #0c0a09; }
.col-left .lead { margin: 32px -40px 0; font-size: 31px; line-height: 48px; letter-spacing: -0.0078em; text-align: center; color: #4b5563; }
.col-left .grid { margin-top: 63px; display: grid; grid-template-columns: 378px 378px; gap: 48px; }
.card { background: #fff; border-radius: 16px; padding: 33px 32px 31px; box-shadow: 0 1px 4px rgba(0, 0, 0, .07); }
.card-title { font-size: 31px; line-height: 48px; font-weight: 600; letter-spacing: 0.004em; }
.card-body { margin-top: 8px; font-size: 27px; line-height: 40px; letter-spacing: 0.005em; color: #6b7280; }
.card.soft .card-title { font-weight: 500; letter-spacing: -0.002em; }
.card.soft .card-body { margin-top: 16px; color: #78716c; }

.col-middle { width: 940px; flex: none; background: #fff; padding: 48px 48px 0; }
.auth { width: 844px; height: 1300px; border: 2px solid #e5e5e5; border-radius: 16px; background: #fff; padding: 48px; display: flex; flex-direction: column; font-size: 27px; box-shadow: 0 1px 4px rgba(0, 0, 0, .06); }
.auth-logo { width: 128px; height: 128px; align-self: center; }
h2 { margin-top: 57px; line-height: 64px; font-size: 46.5px; font-weight: 600; letter-spacing: -0.0468em; text-align: center; color: #0c0a09; }
.auth-sub { margin-top: 8px; line-height: 40px; text-align: center; letter-spacing: 0.006em; color: #78716c; }
.switch { margin-top: 47px; height: 80px; flex: none; border-radius: 12px; background: #f5f5f4; padding: 8px; display: flex; font-weight: 500; color: #78716c; letter-spacing: 0.018em; }
.switch span { flex: 1; display: flex; align-items: center; justify-content: center; border-radius: 8px; }
.switch .on { background: #fff; color: #0c0a09; box-shadow: 0 2px 4px rgba(0, 0, 0, .06); }
label { font-weight: 500; letter-spacing: 0.01em; line-height: 28px; color: #0c0a09; }
.email-label { margin: 29px 0 23px; }
.input { height: 80px; flex: none; border: 2px solid #e5e5e5; border-radius: 12px; padding-left: 24px; line-height: 78px; background: #fff; color: #75716d; }
.pw-row { height: 71px; margin: 33px 0 24px; display: flex; justify-content: space-between; flex: none; }
.pw-row a { padding-top: 24px; line-height: 32px; font-size: 23.5px; letter-spacing: 0.008em; color: #a3c8f5; }
.submit { margin-top: 32px; height: 80px; flex: none; border: 0; border-radius: 12px; background: #a3c8f5; color: #fff; font-weight: 500; letter-spacing: 0.0125em; }
.divider { margin: 32px 0; height: 32px; display: flex; align-items: center; font-size: 23.5px; letter-spacing: 0.0125em; color: #78716c; flex: none; white-space: nowrap; }
.divider i { flex: 1; height: 2px; background: #e5e5e5; }
.divider span { padding: 0 16px; }
.providers { display: grid; grid-template-columns: 360px 360px; gap: 24px; }
.providers button { height: 80px; border: 2px solid #e5e5e5; border-radius: 12px; background: #fff; color: #0c0a09; font-weight: 500; letter-spacing: 0.0185em; display: flex; align-items: center; justify-content: center; gap: 32px; }

.col-right { width: 976px; flex: none; background: #ecf3fe; padding: 180px 96px 0; box-shadow: inset 0 2px 0 #e3edf6; }
.col-right h1 { font-size: 70px; line-height: 80px; font-weight: 700; letter-spacing: -0.0405em; color: #0c0a09; }
.col-right .lead { margin-top: 46px; font-size: 35px; line-height: 56px; letter-spacing: -0.0185em; color: #0c0a09; }
.col-right .grid { margin-top: 48px; display: grid; grid-template-columns: 376px 376px; gap: 32px; }

/* covered window */
.back-window { position: absolute; left: 52px; top: 1500px; width: 2828px; height: 300px; display: flex; overflow: hidden; background: #fdfdfd; }
.back-left { width: 964px; flex: none; background: #f9fafc; padding: 114px 80px 0; display: grid; grid-template-columns: 378px 378px; gap: 48px; }
.tail .card-body { margin-top: 136px; }
.back-middle { width: 940px; flex: none; padding: 0 48px; }
.back-auth { height: 320px; border: 2px solid #e0e0e0; border-top: 0; padding: 294px 48px 0; display: grid; grid-template-columns: 360px 360px; gap: 24px; }
.back-auth i { height: 80px; border: 2px solid #e0e0e0; border-radius: 12px; }
.back-right { width: 924px; flex: none; background: #ecf3fe; padding: 158px 96px 0; display: grid; grid-template-columns: 376px 376px; gap: 32px; }

/* dock */
.dock {
  position: absolute; left: 217px; top: 1632px; width: 2447px; height: 158px; border-radius: 46px; padding: 0 0 0 21px;
  display: flex; align-items: flex-start;
  background: linear-gradient(180deg, #d0d0ce 0, #d6d6d5 35%, #dededd 70%, #e6e6e5 100%);
  box-shadow: inset 0 0 0 1.500px rgba(255, 255, 255, .45), 0 0 0 1px rgba(0, 0, 0, .12), 0 2px 76px rgba(0, 0, 0, .26);
}
.dock-item { position: relative; width: 104px; height: 158px; padding-top: 22px; margin-right: 32px; flex: none; }
.dock-item svg { width: 104px; height: 104px; filter: drop-shadow(0 2px 2px rgba(0, 0, 0, .22)); }
.dock-item i { position: absolute; left: 48px; top: 146px; width: 8px; height: 8px; border-radius: 50%; background: #666; }
.badge { position: absolute; right: -16px; top: 10px; height: 50px; width: 62px; border-radius: 25px; background: #e35345; color: #fff; font-size: 27px; font-weight: 400; letter-spacing: -0.02em; line-height: 50px; text-align: center; box-shadow: 0 1px 5px rgba(0, 0, 0, .3); }
.badge.round { right: -15px; width: 50px; }
.dock-rule { width: 2px; height: 118px; margin: 20px 44px 0 16px; background: #a4a4a3; flex: none; }
.dock-rule.last { margin: 20px 0 0 14px; }
.trash { width: 92px; height: 120px; margin: 12px 0 0 52px; filter: drop-shadow(0 2px 2px rgba(0, 0, 0, .25)); }
</style>
